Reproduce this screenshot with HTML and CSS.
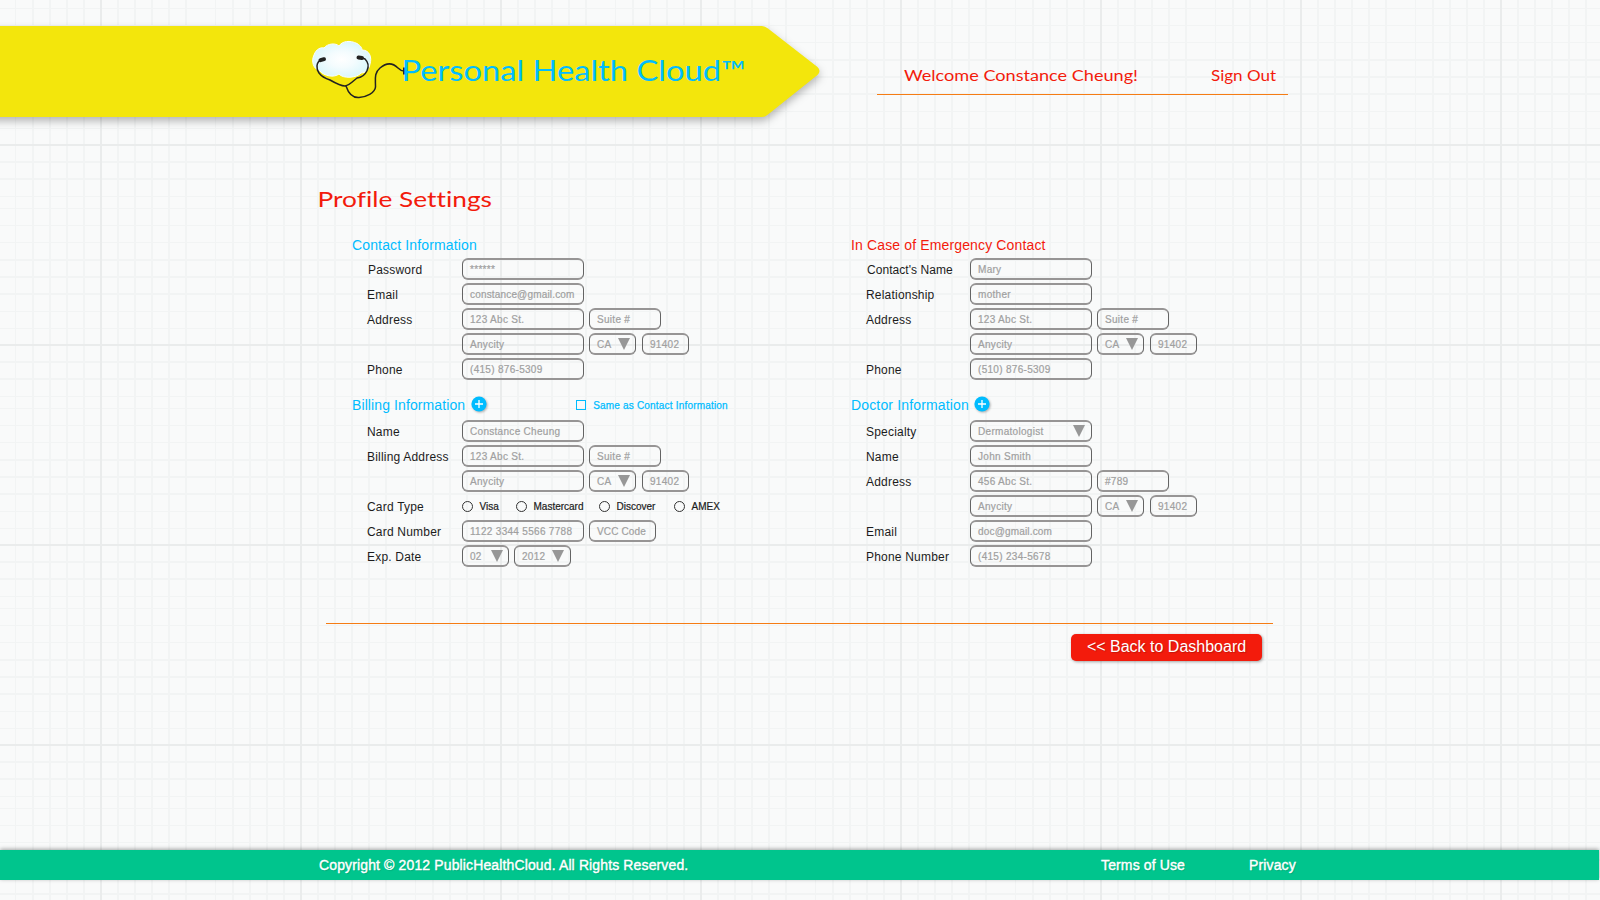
FILE: index.html
```html
<!DOCTYPE html>
<html lang="en">
<head>
<meta charset="utf-8">
<title>Personal Health Cloud - Profile Settings</title>
<link rel="stylesheet" href="styles.css">
</head>
<body>
<header class="header">
  <svg class="banner" width="840" height="140" viewBox="0 0 840 140" role="img" aria-label="Personal Health Cloud">
    <defs>
      <radialGradient id="cloud"><stop offset="0" stop-color="#fff"/><stop offset=".45" stop-color="#f4fcfe"/><stop offset="1" stop-color="#dcf7fc"/></radialGradient>
    </defs>
    <path class="banner-shape" d="M-20 26H762Q765 26 768 28.500L817.500 67Q821.500 71 817.500 75L768 114.500Q765 117 762 117H-20Z"/>
    <path d="M320 71C313 69 311 61 314 55C316 49 321 47 324 48C328 43 336 43 339 46C342 41 350 40 357 43.500C361 46 362 48 362 50C370 50 372 58 370 64C369 70 365 73 361 73C357 78 343 79 339 74C334 78 324 76 320 71Z" fill="url(#cloud)" stroke="#fafeff"/>
    <path d="M321 60C316 62 316 69 319 73C322 77 327 79 330 80C337 84 341 86 345 86C350 85 354 80 357 78C366 77 372 66 365 59L362 58M346 86C348 92 352 98 359 97.500C366 97 375 93 375.500 87C375.500 79 374 73 380 68C387 62 393 63 398 68C400 70 402 71 404 71" fill="none" stroke="#222" stroke-width="1.500"/>
    <path d="M320.500 60.200L324 59.200M358.500 57.500L362 58" stroke="#222" stroke-width="4" stroke-linecap="round"/>
    <path d="M404 67.500V74.500" stroke="#222" stroke-width="2"/>
    <text class="brand" x="401.500" y="81" textLength="344" lengthAdjust="spacingAndGlyphs">Personal Health Cloud™</text>
  </svg>
  <nav class="account">
    <svg width="411" height="30" viewBox="0 0 411 30">
      <text class="account-text" x="27" y="17" textLength="234" lengthAdjust="spacingAndGlyphs">Welcome Constance Cheung!</text>
      <text class="account-text" x="334" y="17" textLength="65" lengthAdjust="spacingAndGlyphs">Sign Out</text>
    </svg>
  </nav>
</header>

<main class="main">
  <h1 class="title"><svg width="180" height="32" viewBox="0 0 180 32"><text class="title-text" x="-.5" y="23" textLength="174.500" lengthAdjust="spacingAndGlyphs">Profile Settings</text></svg></h1>
  <div class="columns">
    <div class="column left">
      <section class="contact">
        <h2 class="heading">Contact Information</h2>
        <div class="row"><label class="nudge">Password</label><span class="field">******</span></div>
        <div class="row"><label>Email</label><span class="field tight">constance@gmail.com</span></div>
        <div class="row"><label>Address</label><span class="field">123 Abc St.</span><span class="field suite">Suite #</span></div>
        <div class="row"><label></label><span class="field">Anycity</span><span class="field small">CA<i class="arrow"></i></span><span class="field zip">91402</span></div>
        <div class="row"><label>Phone</label><span class="field">(415) 876-5309</span></div>
      </section>
      <section>
        <div class="heading-row">
          <h2 class="heading">Billing Information</h2>
          <svg class="plus" width="16" height="16" viewBox="0 0 16 16"><circle cx="8" cy="8" r="7.600" fill="#00bcff"/><path d="M8 4V12M4 8H12" stroke="#fff" stroke-width="1.300"/></svg>
          <span class="same"><i class="check"></i>Same as Contact Information</span>
        </div>
        <div class="row"><label>Name</label><span class="field">Constance Cheung</span></div>
        <div class="row"><label>Billing Address</label><span class="field">123 Abc St.</span><span class="field suite">Suite #</span></div>
        <div class="row"><label></label><span class="field">Anycity</span><span class="field small">CA<i class="arrow"></i></span><span class="field zip">91402</span></div>
        <div class="row"><label>Card Type</label>
          <div class="cards"><span><i class="radio"></i>Visa</span><span><i class="radio"></i>Mastercard</span><span><i class="radio"></i>Discover</span><span><i class="radio"></i>AMEX</span></div>
        </div>
        <div class="row"><label>Card Number</label><span class="field">1122 3344 5566 7788</span><span class="field vcc">VCC Code</span></div>
        <div class="row"><label>Exp. Date</label><span class="field small">02<i class="arrow"></i></span><span class="field year">2012<i class="arrow"></i></span></div>
      </section>
    </div>
    <div class="column right">
      <section class="contact">
        <h2 class="heading alert">In Case of Emergency Contact</h2>
        <div class="row"><label class="nudge tight">Contact's Name</label><span class="field">Mary</span></div>
        <div class="row"><label>Relationship</label><span class="field">mother</span></div>
        <div class="row"><label>Address</label><span class="field">123 Abc St.</span><span class="field suite">Suite #</span></div>
        <div class="row"><label></label><span class="field">Anycity</span><span class="field small">CA<i class="arrow"></i></span><span class="field zip">91402</span></div>
        <div class="row"><label>Phone</label><span class="field">(510) 876-5309</span></div>
      </section>
      <section>
        <div class="heading-row">
          <h2 class="heading">Doctor Information</h2>
          <svg class="plus" width="16" height="16" viewBox="0 0 16 16"><circle cx="8" cy="8" r="7.600" fill="#00bcff"/><path d="M8 4V12M4 8H12" stroke="#fff" stroke-width="1.300"/></svg>
        </div>
        <div class="row"><label>Specialty</label><span class="field">Dermatologist<i class="arrow"></i></span></div>
        <div class="row"><label>Name</label><span class="field">John Smith</span></div>
        <div class="row"><label>Address</label><span class="field">456 Abc St.</span><span class="field suite">#789</span></div>
        <div class="row"><label></label><span class="field">Anycity</span><span class="field small">CA<i class="arrow"></i></span><span class="field zip">91402</span></div>
        <div class="row"><label>Email</label><span class="field tight">doc@gmail.com</span></div>
        <div class="row"><label>Phone Number</label><span class="field">(415) 234-5678</span></div>
      </section>
    </div>
  </div>
  <div class="actions"><a class="back">&lt;&lt; Back to Dashboard</a></div>
</main>

<footer class="footer">
  <span class="copy">Copyright © 2012 PublicHealthCloud. All Rights Reserved.</span>
  <span class="terms">Terms of Use</span>
  <span class="privacy">Privacy</span>
</footer>
</body>
</html>
```
FILE: styles.css
```css
* { box-sizing: border-box; }

/* Graph paper: 200px tile of uneven minor lines, then major lines on top */
body {
  --m: #f2f4f4;
  margin: 0;
  height: 900px;
  overflow: hidden;
  display: flex;
  flex-direction: column;
  font-family: "Liberation Sans", Arial, sans-serif;
  background-color: #f9fafa;
  background-image:
    linear-gradient(90deg, #eaecec 2px, transparent 2px),
    linear-gradient(#eaecec 2px, transparent 2px),
    linear-gradient(90deg, transparent 17px, var(--m) 17px 19px, transparent 19px 34px, var(--m) 34px 36px, transparent 36px 51px, var(--m) 51px 53px, transparent 53px 68px, var(--m) 68px 70px, transparent 70px 85px, var(--m) 85px 87px, transparent 87px 115px, var(--m) 115px 116px, transparent 116px 132px, var(--m) 132px 134px, transparent 134px 149px, var(--m) 149px 151px, transparent 151px 166px, var(--m) 166px 168px, transparent 168px 183px, var(--m) 183px 185px, transparent 185px),
    linear-gradient(transparent 17px, var(--m) 17px 19px, transparent 19px 34px, var(--m) 34px 36px, transparent 36px 52px, var(--m) 52px 53px, transparent 53px 64px, var(--m) 64px 65px, transparent 65px 81px, var(--m) 81px 82px, transparent 82px 98px, var(--m) 98px 99px, transparent 99px 115px, var(--m) 115px 117px, transparent 117px 132px, var(--m) 132px 134px, transparent 134px 149px, var(--m) 149px 151px, transparent 151px 167px, var(--m) 167px 168px, transparent 168px 184px, var(--m) 184px 185px, transparent 185px);
  background-size: 200px 200px;
  background-position: 100px 144px;
}

.header { display: flex; height: 140px; flex: none; }
.banner { display: block; flex: none; overflow: visible; }
.banner-shape { fill: #f3e60c; filter: drop-shadow(0 4px 4px rgba(0, 0, 0, .28)); }
.brand { font: 28px Lato, sans-serif; fill: #00bcff; }
.account { margin: 64px 0 0 37px; width: 411px; height: 31px; border-bottom: 1px solid #f57c14; }
.account svg { display: block; }
.account-text { font: 15.500px Lato, sans-serif; fill: #f31b0c; }

.main { flex: none; height: 710px; }
.title { margin: 44px 0 0 318px; height: 32px; line-height: 0; }
.title svg { overflow: visible; }
.title-text { font: 22px Lato, sans-serif; font-variant-ligatures: none; fill: #f31b0c; }

.columns { display: flex; padding: 21px 0 0 352px; height: 407px; }
.column { width: 499px; flex: none; }
.contact { height: 156px; }
.heading { margin: 0; height: 21px; font-weight: 400; font-size: 14px; line-height: 16px; letter-spacing: .14px; color: #00bcff; white-space: nowrap; }
.heading.alert { color: #f31b0c; }
.heading-row { display: flex; height: 27px; padding-top: 4px; }
.heading-row .heading { letter-spacing: .1px; }
.plus { flex: none; margin: -1px 0 0 5.500px; filter: drop-shadow(1px 1px 1px rgba(0, 0, 0, .3)); }
.right .heading-row .heading { letter-spacing: .15px; }
.same { display: flex; align-items: center; height: 16px; margin-left: 89.500px; font-size: 10px; letter-spacing: .19px; color: #00bcff; white-space: nowrap; -webkit-text-stroke: .25px #00bcff; }
.check { width: 10px; height: 10px; margin-right: 7px; border: 1px solid #00bcff; }

.row { display: flex; height: 25px; padding-left: 15px; }
.row label { width: 95px; flex: none; font-size: 12px; line-height: 24px; letter-spacing: .2px; color: #1c1c1c; white-space: nowrap; }
.right .row label { width: 104px; }
.row .nudge { text-indent: 1px; }
.row label.tight { letter-spacing: .05px; }
.field { display: flex; justify-content: space-between; align-items: center; flex: none; width: 122px; height: 22px; padding: 0 6px 0 7px; border: solid #646464; border-width: 2px 1px; border-top-color: #979595; border-bottom-color: #979595; border-radius: 6px; font-size: 10px; letter-spacing: .3px; color: #a0a0a0; white-space: nowrap; -webkit-text-stroke: .2px #a0a0a0; }
.field + .field { margin-left: 5px; }
.field.tight { letter-spacing: .17px; }
.suite { width: 72px; }
.small, .zip { width: 47px; }
.field + .zip { margin-left: 6px; }
.field.vcc { width: 67px; letter-spacing: .15px; }
.field + .year { width: 57px; margin-left: 5px; }
.arrow { width: 12px; height: 12px; flex: none; margin-right: -1px; background: #979797; clip-path: polygon(0 0, 100% 0, 50% 100%); }
.field:not(.small) .arrow { margin-right: 0; }
.year .arrow { margin-right: -1px; }

.cards { display: flex; height: 22px; align-items: center; font-size: 10px; color: #1c1c1c; -webkit-text-stroke: .2px #1c1c1c; }
.cards span { display: flex; align-items: center; width: 54px; }
.cards span:nth-child(2) { width: 83px; }
.cards span:nth-child(3) { width: 75px; }
.radio { width: 11px; height: 11px; margin-right: 6.500px; border: 1px solid #333; border-radius: 50%; }

.actions { margin-left: 326px; width: 947px; border-top: 1px solid #f57c14; display: flex; justify-content: flex-end; padding: 10px 11px 0 0; }
.back { width: 191px; height: 27px; border-radius: 5px; background: #f31b0c; color: #fff; font-size: 16px; line-height: 26px; text-align: center; box-shadow: 1px 1px 3px rgba(0, 0, 0, .35); text-shadow: 1px 1px 1px rgba(0, 0, 0, .2); }

.footer { flex: none; height: 30px; width: 1599px; padding-left: 319px; display: flex; align-items: center; background: #00c58d; color: #fff; font-size: 14px; box-shadow: 0 -1px 4px rgba(0, 0, 0, .35); -webkit-text-stroke: .4px #fff; text-shadow: 1px 1px 1px rgba(0, 0, 0, .15); white-space: nowrap; letter-spacing: .13px; }
.copy { width: 782px; }
.terms { width: 148px; }
```
